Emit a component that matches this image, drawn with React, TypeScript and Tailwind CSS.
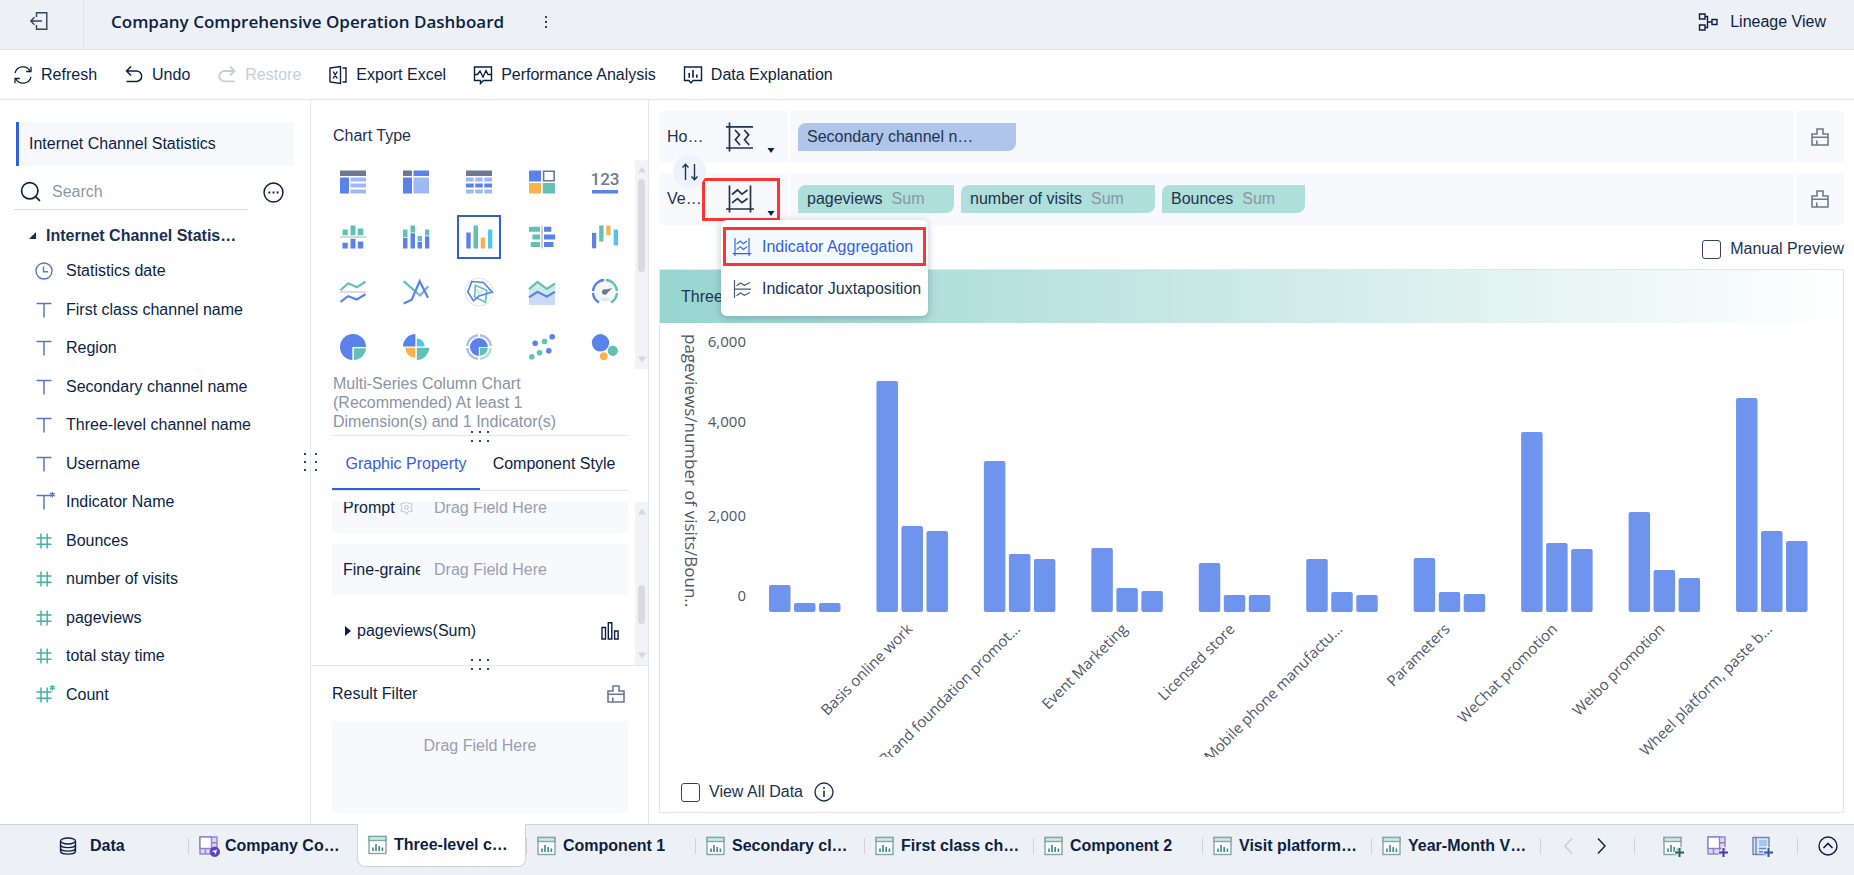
import { useState } from "react";
import type { ReactNode } from "react";

const BLUE = "#5b82ea";
const SOFT = "#9dbaf5";
const GREY = "#6b7a90";
const GREEN = "#62c0b4";
const ORANGE = "#fbb24c";
const CYAN = "#4fc6f2";

interface IconProps {
  children: ReactNode;
  className?: string;
  box?: number;
}

function Icon({ children, className = "size-5", box = 20 }: IconProps) {
  return (
    <svg
      viewBox={`0 0 ${box} ${box}`}
      className={`shrink-0 ${className}`}
      fill="none"
      stroke="currentColor"
      strokeWidth="1.4"
      aria-hidden="true"
    >
      {children}
    </svg>
  );
}

/* ---------- small icons ---------- */

const BrushIcon = () => (
  <Icon className="size-5 text-[#6b7a90]">
    <path d="M2 18V7H7V2H13V7H18V18ZM2 10.3H18M6.8 18V13.5" strokeWidth="1.6" />
  </Icon>
);

const ComponentIcon = ({ plus = false }: { plus?: boolean }) => (
  <Icon className="size-[22px]" box={22}>
    <rect x="2" y="2.5" width="17" height="17" fill="#fff" stroke="#7fa9a5" />
    <rect x="2" y="2.5" width="17" height="4" fill="#cfeae6" stroke="#7fa9a5" />
    <path d="M6 17V13.5M9 17V10M12.2 17V12M15.4 17V13.5" stroke="#3c8a83" strokeWidth="1.6" />
    {plus && (
      <>
        <path d="M17.5 12V22M12.5 17.5H22" stroke="#edf1f6" strokeWidth="4" />
        <path d="M17.5 13V22M13 17.5H22" stroke="#245f59" strokeWidth="2" />
      </>
    )}
  </Icon>
);

const DashboardIcon = ({ plus = false }: { plus?: boolean }) => (
  <Icon className="size-[22px]" box={22}>
    <rect x="2" y="2" width="17" height="17" fill="#dcd7f5" stroke="#8d80cf" />
    <rect x="2" y="2" width="11.5" height="11.5" fill="#fff" stroke="#8d80cf" />
    <path d="M7.5 13.5V19M13.5 13.5V19M13.5 7.8H19M13.5 13.5H19" stroke="#8d80cf" />
    {plus ? (
      <>
        <path d="M17.5 12V22M12.5 17.5H22" stroke="#edf1f6" strokeWidth="4" />
        <path d="M17.5 13V22M13 17.5H22" stroke="#4a35a8" strokeWidth="2" />
      </>
    ) : (
      <>
        <circle cx="16.8" cy="16.8" r="4.8" fill="#5a45bd" stroke="#5a45bd" strokeWidth="0.8" />
        <path d="M13.8 16.2L19.2 14.4L17.4 19.8L16.6 17.2Z" fill="#fff" stroke="none" />
      </>
    )}
  </Icon>
);

const ReportIcon = () => (
  <Icon className="size-[22px]" box={22}>
    <rect x="2" y="2.5" width="16" height="17" fill="#dce6f8" stroke="#6785bd" />
    <path d="M5 2.5V19.5" stroke="#6785bd" />
    <rect x="8" y="5" width="8" height="6" fill="#aac3ef" stroke="none" />
    <path d="M8 13.5H15M8 16.8H12" stroke="#6785bd" />
    <path d="M17.5 12.5V22M12.5 17.5H22" stroke="#edf1f6" strokeWidth="4" />
    <path d="M17.5 13V22M13 17.5H22" stroke="#33579c" strokeWidth="2" />
  </Icon>
);

const AggregateIcon = ({ className }: { className: string }) => (
  <Icon className={className} box={30}>
    <path d="M4.5 1.5V28.5M25.5 1.5V28.5M1 25H29" strokeWidth="1.7" />
    <path d="M7 10.5L12.5 6L17 10.2L22.5 6M7 18.8L12.5 14.5L17 18.6L22.5 14.5" strokeWidth="1.7" />
  </Icon>
);

const AggregateHorizontalIcon = () => (
  <Icon className="size-[30px]" box={30}>
    <path d="M4.5 0.5V29.5M1 4.8H28M1 26H28" strokeWidth="1.7" />
    <path d="M10 8L14.5 12.8L10.4 17.8L15 23M19.2 8L23.7 12.8L19.6 17.8L24.2 23" strokeWidth="1.7" />
  </Icon>
);

const JuxtaposeIcon = () => (
  <Icon className="size-5 text-[#4a5a75]">
    <path d="M2.5 1V19M2.5 10.2H19" strokeWidth="1.2" />
    <path d="M4.5 6.8L8.5 4L12.5 6.3L18 3.5M4.5 16.8L8.5 14L12.5 16.3L18 13.5" strokeWidth="1.2" />
  </Icon>
);

const Caret = () => (
  <svg viewBox="0 0 8 5" className="h-[5px] w-2 shrink-0 fill-[#0d1f42]" aria-hidden="true">
    <path d="M0.5 0H7.5L4 5Z" />
  </svg>
);

const Dots = () => (
  <div className="grid grid-cols-3 gap-x-[6px] gap-y-[7px]">
    {[0, 1, 2, 3, 4, 5].map((i) => (
      <span key={i} className="size-[2px] bg-[#33435f]" />
    ))}
  </div>
);

/* ---------- toolbar ---------- */

const toolbar = [
  {
    label: "Refresh",
    icon: (
      <Icon>
        <path d="M2 8.2A8.2 8.2 0 0 1 17.2 6.2M18 11.8A8.2 8.2 0 0 1 2.8 13.8" strokeWidth="1.3" />
        <path d="M18 1.8V6.5H13.2M2 18.2V13.5H6.8" strokeWidth="1.3" />
      </Icon>
    ),
  },
  {
    label: "Undo",
    icon: (
      <Icon>
        <path d="M7 1.5L2.5 6L7 10.5M2.5 6H12.5A5.2 5.2 0 0 1 12.5 16.4H2.5" strokeWidth="1.5" />
      </Icon>
    ),
  },
  {
    label: "Restore",
    disabled: true,
    icon: (
      <Icon>
        <path d="M13 1.5L17.5 6L13 10.5M17.5 6H7.5A5.2 5.2 0 0 0 7.5 16.4H17.5" strokeWidth="1.8" />
      </Icon>
    ),
  },
  {
    label: "Export Excel",
    icon: (
      <Icon>
        <path d="M2 3L12.5 1.5V18.5L2 17ZM14.5 3H18V17H14.5M5.2 6.5L9.2 13.5M9.2 6.5L5.2 13.5" />
      </Icon>
    ),
  },
  {
    label: "Performance Analysis",
    icon: (
      <Icon>
        <path d="M1.5 2H18.5V15.5H10.5L7.5 18.5V15.5H1.5Z" />
        <path d="M1.5 9.5H4.5L7 6L10 12L13 5.5L15 9.5H18" />
      </Icon>
    ),
  },
  {
    label: "Data Explanation",
    icon: (
      <Icon>
        <path d="M1.5 2H18.5V15.5H10L8 18L6 15.5H1.5Z" />
        <path d="M6.2 8V12.8M10 5V12.8M13.8 9.5V12.8" strokeWidth="1.6" />
      </Icon>
    ),
  },
];

function Toolbar() {
  return (
    <div className="flex h-[50px] shrink-0 items-center gap-[27px] border-b border-[#e3e6ee] px-[13px]">
      {toolbar.map((t) => (
        <button
          key={t.label}
          type="button"
          disabled={t.disabled}
          className="flex items-center gap-2 whitespace-nowrap disabled:text-[#c8cdd6]"
        >
          {t.icon}
          {t.label}
        </button>
      ))}
    </div>
  );
}

/* ---------- left: field tree ---------- */

type FieldKind = "date" | "text" | "number";

const fields: { name: string; kind: FieldKind; star?: boolean }[] = [
  { name: "Statistics date", kind: "date" },
  { name: "First class channel name", kind: "text" },
  { name: "Region", kind: "text" },
  { name: "Secondary channel name", kind: "text" },
  { name: "Three-level channel name", kind: "text" },
  { name: "Username", kind: "text" },
  { name: "Indicator Name", kind: "text", star: true },
  { name: "Bounces", kind: "number" },
  { name: "number of visits", kind: "number" },
  { name: "pageviews", kind: "number" },
  { name: "total stay time", kind: "number" },
  { name: "Count", kind: "number", star: true },
];

function FieldIcon({ kind, star }: { kind: FieldKind; star?: boolean }) {
  const color = kind === "number" ? "text-[#41b3a6]" : "text-[#5578c8]";
  return (
    <Icon className={`size-5 overflow-visible ${color}`}>
      {kind === "date" && (
        <>
          <circle cx="10" cy="10" r="8" />
          <path d="M9.5 5.5V10.8H14" />
        </>
      )}
      {kind === "text" && <path d="M2.5 3.5H17.5M10 3.5V17.5" strokeWidth="1.5" />}
      {kind === "number" && <path d="M2.5 7H17.5M2.5 13.2H17.5M7 2.5V17.5M13.2 2.5V17.5" strokeWidth="1.5" />}
      {star && <path d="M18.3 0V5.4M15.9 1.3L20.7 4.1M20.7 1.3L15.9 4.1" strokeWidth="1.3" />}
    </Icon>
  );
}

function FieldPanel() {
  return (
    <aside className="flex w-[311px] shrink-0 flex-col border-r border-[#e3e6ee] pt-[22px]">
      <button
        type="button"
        className="mr-4 ml-4 h-11 border-l-[3px] border-[#2f62d9] bg-[#f7f9fd] pl-[10px] text-left"
      >
        Internet Channel Statistics
      </button>
      <div className="mt-2 flex items-center justify-between pr-[26px] pl-[14px]">
        <label className="flex h-9 w-[234px] items-center gap-[11px] border-b border-[#d9dce3] pl-[6px]">
          <Icon className="size-[21px]">
            <circle cx="9.3" cy="9.3" r="7.8" strokeWidth="1.6" />
            <path d="M14.8 14.8L19 19" strokeWidth="1.6" />
          </Icon>
          <input
            aria-label="Search"
            placeholder="Search"
            className="w-full min-w-0 bg-transparent outline-none placeholder:text-[#8f97a6]"
          />
        </label>
        <button type="button" aria-label="More">
          <Icon className="size-[21px]">
            <circle cx="10" cy="10" r="9" />
            <path d="M5.2 10H7M9.1 10H10.9M13 10H14.8" strokeWidth="1.8" />
          </Icon>
        </button>
      </div>
      <button type="button" className="mt-3 flex h-[27px] items-center gap-[10px] pl-[29px] font-bold text-[#1b2f52]">
        <svg viewBox="0 0 7 7" className="size-[7px] fill-[#1b2f52]" aria-hidden="true">
          <path d="M7 0V7H0Z" />
        </svg>
        Internet Channel Statis…
      </button>
      <ul className="mt-[3px] flex h-[462px] flex-col">
        {fields.map((f) => (
          <li key={f.name} className="flex flex-1 items-center gap-3 pl-[34px]">
            <FieldIcon kind={f.kind} star={f.star} />
            {f.name}
          </li>
        ))}
      </ul>
    </aside>
  );
}

/* ---------- middle: chart type and properties ---------- */

const chartTypes: { name: string; art: ReactNode }[] = [
  {
    name: "Group table",
    art: (
      <>
        <path fill={GREY} d="M2 3.5H28V9H2Z" />
        <path fill={BLUE} d="M2 10.5H11V26.5H2Z" />
        <path fill={SOFT} d="M12.5 10.5H28V14.5H12.5ZM12.5 16.5H28V20.5H12.5ZM12.5 22.5H28V26.5H12.5Z" />
      </>
    ),
  },
  {
    name: "Cross table",
    art: (
      <>
        <path fill={GREY} d="M2 3.5H11V9H2Z" />
        <path fill={BLUE} d="M12.5 3.5H28V9H12.5ZM2 10.5H11V26.5H2Z" />
        <path fill={SOFT} d="M12.5 10.5H28V26.5H12.5Z" />
      </>
    ),
  },
  {
    name: "Detail table",
    art: (
      <>
        <path fill={GREY} d="M2 3.5H28V9H2Z" />
        <path fill={SOFT} d="M2 10.5H9.7V14.5H2ZM11.3 10.5H18.7V14.5H11.3ZM20.3 10.5H28V14.5H20.3ZM2 22.5H9.7V26.5H2ZM11.3 22.5H18.7V26.5H11.3ZM20.3 22.5H28V26.5H20.3Z" />
        <path fill={BLUE} d="M2 16.5H9.7V20.5H2ZM11.3 16.5H18.7V20.5H11.3ZM20.3 16.5H28V20.5H20.3Z" />
      </>
    ),
  },
  {
    name: "Heat block",
    art: (
      <>
        <path fill={BLUE} d="M2 3.5H14V14.5H2Z" />
        <path stroke={GREY} strokeWidth="1.6" fill="#fff" d="M16.6 4.3H27.2V13.7H16.6Z" />
        <path fill={ORANGE} d="M2 16H14V26.5H2Z" />
        <path fill={GREEN} d="M15.8 16H28V26.5H15.8Z" />
      </>
    ),
  },
  {
    name: "KPI card",
    art: (
      <>
        <text
          x="15"
          y="18"
          textAnchor="middle"
          fill={GREY}
          className="font-['Roboto',sans-serif] text-[17px] font-medium"
        >
          123
        </text>
        <path fill={BLUE} d="M2 23H28V26.5H2Z" />
      </>
    ),
  },
  {
    name: "Contrast column",
    art: (
      <>
        <path fill="#b9c0cb" d="M2 14.4H28V15.6H2Z" />
        <path fill={GREEN} d="M4.5 7.5H9.8V13.2H4.5ZM12.5 3.5H17.5V13.2H12.5ZM19.8 6.5H25.3V13.2H19.8Z" />
        <path fill={BLUE} d="M4.5 20.8H9.8V26.5H4.5ZM12.5 16.8H17.5V26.5H12.5ZM19.8 19.5H25.3V26.5H19.8Z" />
      </>
    ),
  },
  {
    name: "Stacked column",
    art: (
      <>
        <path fill={GREEN} d="M2 7.5H6.5V15H2ZM9.5 3.5H14V10.5H9.5ZM16.5 14H21V19H16.5ZM24 7.5H28.3V13.5H24Z" />
        <path fill={BLUE} d="M2 15.8H6.5V26.5H2ZM9.5 11.2H14V26.5H9.5ZM16.5 19.8H21V26.5H16.5ZM24 14.2H28.3V26.5H24Z" />
      </>
    ),
  },
  {
    name: "Multi-series column",
    art: (
      <>
        <path fill={BLUE} d="M2.3 10.5H6.7V26.5H2.3Z" />
        <path fill={GREEN} d="M9.5 3.5H14V26.5H9.5Z" />
        <path fill={ORANGE} d="M16.7 15.5H21V26.5H16.7Z" />
        <path fill={CYAN} d="M24 7.5H28.3V26.5H24Z" />
      </>
    ),
  },
  {
    name: "Butterfly",
    art: (
      <>
        <path fill="#9aa4b3" d="M14.5 3.5H15.5V26.5H14.5Z" />
        <path fill={GREEN} d="M2 4.8H13V9.8H2ZM5.5 12.5H13V17.5H5.5ZM3.8 20H13V25H3.8Z" />
        <path fill={BLUE} d="M17 4.8H24.3V9.8H17ZM17 12.5H28.2V17.5H17ZM17 20H26.5V25H17Z" />
      </>
    ),
  },
  {
    name: "Waterfall",
    art: (
      <>
        <path fill={BLUE} d="M2 10.8H6.2V26.3H2Z" />
        <path fill={GREEN} d="M9.2 3.5H13.5V19.5H9.2Z" />
        <path fill={ORANGE} d="M16.3 3.5H20.5V13H16.3Z" />
        <path fill={CYAN} d="M23.7 7.5H28V23.5H23.7Z" />
      </>
    ),
  },
  {
    name: "Range line",
    art: (
      <g fill="none" strokeWidth="2.2">
        <path stroke={GREEN} d="M2.5 13.2L10.2 6.2L18.8 10.2L27.5 4.8" />
        <path stroke="#c5cbd5" strokeWidth="1.2" d="M2 15H28" />
        <path stroke={BLUE} d="M2.5 24.8L10.2 19.2L18.8 22.5L27.5 17.2" />
      </g>
    ),
  },
  {
    name: "Line",
    art: (
      <g fill="none" strokeWidth="2.2">
        <path stroke={GREEN} d="M2.7 4.2L19 18.5L27.3 9.2" />
        <path stroke={BLUE} d="M2.7 26.5L10.7 22.8L18.7 4.2L27 20.8" />
      </g>
    ),
  },
  {
    name: "Radar",
    art: (
      <g fill="none">
        <circle cx="15" cy="15" r="14" stroke="#dde0e6" />
        <path fill="#e3e7ee" d="M11 12L20 14L14 19Z" />
        <path stroke={GREEN} strokeWidth="1.7" d="M11.5 8.2L22.8 13.5L21.5 25.2L10.5 19.8Z" />
        <path stroke={BLUE} strokeWidth="1.7" d="M7.8 4.5L19.5 5.5L28.2 15L15 19L9.5 23.8L3.8 15Z" />
      </g>
    ),
  },
  {
    name: "Area",
    art: (
      <>
        <path fill="#cdebe6" d="M2 12.2L10.5 4.8L19.8 11.8L28 6.5V13L19.8 18L10.5 13.5L2 18.5Z" />
        <path fill="#ccd9f8" d="M2 20.2L10.5 14.8L19.8 19.5L28 14.8V28H2Z" />
        <g fill="none" strokeWidth="2.2">
          <path stroke={GREEN} d="M2 12.2L10.5 4.8L19.8 11.8L28 6.5" />
          <path stroke={BLUE} d="M2 20.2L10.5 14.8L19.8 19.5L28 14.8" />
        </g>
      </>
    ),
  },
  {
    name: "Gauge",
    art: (
      <>
        <circle cx="15" cy="15" r="10" fill="#f5f6f8" />
        <g fill="none" strokeWidth="2.4">
          <path stroke={BLUE} d="M14.2 3A12 12 0 0 0 3 14.2M3 15.8A12 12 0 0 0 9 25.4" />
          <path stroke={GREEN} d="M15.8 3A12 12 0 0 1 27 14.2M27 15.8A12 12 0 0 1 21 25.4" />
          <path stroke="#dcdfe4" strokeWidth="1.8" d="M11 22.5H19" />
        </g>
        <circle cx="14.7" cy="15" r="2.8" fill={GREY} />
        <path fill={GREY} d="M14 13L22.5 11L16 17Z" />
      </>
    ),
  },
  {
    name: "Pie",
    art: (
      <>
        <path fill={BLUE} d="M14.6 15H28A13 13 0 1 0 14.6 28Z" />
        <path fill="#fff" d="M14.6 15H29V29H14.6Z" />
        <path fill={GREEN} d="M15.8 16.2H28A12.6 12.6 0 0 1 15.8 28Z" />
      </>
    ),
  },
  {
    name: "Rose",
    art: (
      <>
        <path fill={BLUE} d="M14.4 14.4H2A12.6 12.6 0 0 1 14.4 2Z" />
        <path fill={CYAN} d="M15.8 14.4V6.5A8 8 0 0 1 23.7 14.4Z" />
        <path fill={ORANGE} d="M14.4 15.8V26A10.3 10.3 0 0 1 4.2 15.8Z" />
        <path fill={GREEN} d="M15.8 15.8H28.2A12.6 12.6 0 0 1 15.8 28Z" />
      </>
    ),
  },
  {
    name: "Nested pie",
    art: (
      <>
        <g fill="none" strokeWidth="2.6">
          <path stroke="#a9bff5" d="M16 3.2A11.9 11.9 0 0 1 26.9 14M14 3.2A11.9 11.9 0 0 0 3.1 14M3.1 16A11.9 11.9 0 0 0 14 26.8" />
          <path stroke="#aeded7" d="M26.9 16A11.9 11.9 0 0 1 16 26.8" />
        </g>
        <path fill={BLUE} d="M14.8 15H23.8A8.9 8.9 0 1 0 14.8 23.9Z" />
        <path fill={GREEN} d="M15.8 15.8H23.8A8.2 8.2 0 0 1 15.8 23.8Z" />
      </>
    ),
  },
  {
    name: "Scatter",
    art: (
      <>
        <g fill={BLUE}>
          <circle cx="25.2" cy="4.8" r="2.8" />
          <circle cx="8.2" cy="11.2" r="2.8" />
          <circle cx="21.8" cy="18.8" r="2.8" />
        </g>
        <g fill={GREEN}>
          <circle cx="17.5" cy="9.5" r="2.8" />
          <circle cx="12.5" cy="20.8" r="2.8" />
          <circle cx="4.8" cy="24.8" r="2.8" />
        </g>
      </>
    ),
  },
  {
    name: "Bubble",
    art: (
      <>
        <circle cx="10.5" cy="10.8" r="8.7" fill={BLUE} />
        <circle cx="22.8" cy="18.8" r="5.1" fill={GREEN} />
        <circle cx="13.8" cy="24.2" r="3.9" fill={ORANGE} />
      </>
    ),
  },
];

function ScrollTrack({ thumb }: { thumb: string }) {
  return (
    <div className="flex w-[13px] shrink-0 flex-col items-center bg-[#f2f3f6] py-[6px]">
      <svg viewBox="0 0 8 7" className="h-[7px] w-2 shrink-0 fill-[#d5d7dc]" aria-hidden="true">
        <path d="M4 0.5L8 6.5H0Z" />
      </svg>
      <div className={`w-[7px] rounded-full bg-[#d9dbe0] ${thumb}`} />
      <svg viewBox="0 0 8 7" className="mt-auto h-[7px] w-2 shrink-0 fill-[#d5d7dc]" aria-hidden="true">
        <path d="M4 6.5L0 0.5H8Z" />
      </svg>
    </div>
  );
}

function PropertyPanel() {
  const [selected, setSelected] = useState("Multi-series column");

  return (
    <section className="relative flex w-[338px] shrink-0 flex-col border-r border-[#e3e6ee]">
      <h2 className="pt-[26px] pl-[22px] leading-[19px] text-[#1f3050]">Chart Type</h2>
      <div className="mt-[15px] flex h-[209px] shrink-0">
        <div className="grid flex-1 grid-cols-[repeat(5,44px)] content-start justify-between gap-y-[11px] pr-2 pl-5">
          {chartTypes.map((c) => (
            <button
              key={c.name}
              type="button"
              aria-label={c.name}
              aria-pressed={c.name === selected}
              onClick={() => setSelected(c.name)}
              className={`flex size-11 items-center justify-center ${
                c.name === selected ? "border-2 border-[#2f62d9]" : ""
              }`}
            >
              <svg viewBox="0 0 30 30" className="size-[30px] shrink-0" aria-hidden="true">
                {c.art}
              </svg>
            </button>
          ))}
        </div>
        <ScrollTrack thumb="mt-[6px] h-[93px]" />
      </div>
      <p className="mt-[5px] pr-[50px] pl-[22px] leading-[19px] text-[#8b94a5]">
        Multi-Series Column Chart (Recommended) At least 1 Dimension(s) and 1 Indicator(s)
      </p>

      <div className="relative mr-5 ml-[21px] h-[5px] border-b border-[#e3e6ee]">
        <div className="absolute inset-x-0 top-0 flex justify-center">
          <Dots />
        </div>
      </div>
      <div role="tablist" className="mr-5 ml-[21px] flex h-[55px] shrink-0 border-b border-[#e3e6ee] whitespace-nowrap">
        <button
          type="button"
          role="tab"
          aria-selected="true"
          className="flex-1 border-b-2 border-[#2f62d9] pt-1 text-[#2f62d9]"
        >
          Graphic Property
        </button>
        <button type="button" role="tab" aria-selected="false" className="flex-1 pt-[2px]">
          Component Style
        </button>
      </div>

      <div className="mt-[11px] flex h-[163px] shrink-0 overflow-hidden">
        <div className="flex flex-1 flex-col justify-end gap-[11px] pr-[7px] pl-[21px]">
          <div className="flex h-[51px] shrink-0 items-center bg-[#f7f9fd] pl-[11px]">
            <span className="flex w-[91px] items-center gap-1">
              Prompt
              <Icon className="size-[15px] text-[#c8cdd6]">
                <path d="M10 1.5L12.6 4.3L17.4 5.2L16.4 10L17.4 14.8L12.6 15.7L10 18.5L7.4 15.7L2.6 14.8L3.6 10L2.6 5.2L7.4 4.3Z" strokeWidth="1.6" />
                <circle cx="10" cy="10" r="2.4" strokeWidth="1.6" />
              </Icon>
            </span>
            <span className="text-[#98a0af]">Drag Field Here</span>
          </div>
          <div className="flex h-[51px] shrink-0 items-center bg-[#f7f9fd] pl-[11px]">
            <span className="mr-[14px] w-[77px] overflow-hidden whitespace-nowrap">Fine-grained</span>
            <span className="text-[#98a0af]">Drag Field Here</span>
          </div>
          <div className="mb-[9px] flex h-[50px] shrink-0 items-center pr-2 pl-[13px]">
            <svg viewBox="0 0 6 10" className="mr-[6px] h-[10px] w-[6px] fill-[#0d1f42]" aria-hidden="true">
              <path d="M0 0L6 5L0 10Z" />
            </svg>
            <span className="flex-1">pageviews(Sum)</span>
            <Icon>
              <path d="M2 6.5H5.5V18H2ZM8.3 1.8H11.8V18H8.3ZM14.6 10H18.1V18H14.6Z" />
            </Icon>
          </div>
        </div>
        <ScrollTrack thumb="mt-[70px] h-[39px]" />
      </div>

      <div className="relative flex flex-1 flex-col border-t border-[#e3e6ee] pb-[11px]">
        <div className="absolute inset-x-0 -top-[7px] flex justify-center">
          <Dots />
        </div>
        <div className="flex h-[55px] items-center justify-between pr-[22px] pl-[21px]">
          Result Filter
          <button type="button" aria-label="Clear result filter">
            <BrushIcon />
          </button>
        </div>
        <div className="mr-5 ml-[21px] flex-1 bg-[#f7f9fd] pt-4 text-center leading-[18px] text-[#98a0af]">
          Drag Field Here
        </div>
      </div>

      <div className="absolute top-[353px] -left-[7px] grid grid-cols-2 gap-x-[9px] gap-y-[6px]">
        {[0, 1, 2, 3, 4, 5].map((i) => (
          <span key={i} className="size-[2px] bg-[#33435f]" />
        ))}
      </div>
    </section>
  );
}

/* ---------- right: axes and chart ---------- */

const verticalFields = [
  { name: "pageviews", width: "w-[156px]" },
  { name: "number of visits", width: "w-[194px]" },
  { name: "Bounces", width: "w-[143px]" },
];

const series: { label: string; bars: [number, number, number] }[] = [
  { label: "", bars: [27, 9, 9] },
  { label: "Basis online work", bars: [231, 86, 81] },
  { label: "Brand foundation promot…", bars: [151, 58, 53] },
  { label: "Event Marketing", bars: [64, 24, 21] },
  { label: "Licensed store", bars: [49, 17, 17] },
  { label: "Mobile phone manufactu…", bars: [53, 20, 17] },
  { label: "Parameters", bars: [54, 20, 18] },
  { label: "WeChat promotion", bars: [180, 69, 63] },
  { label: "Weibo promotion", bars: [100, 42, 34] },
  { label: "Wheel platform, paste b…", bars: [214, 81, 71] },
];

const yTicks = [
  { label: "6,000", y: 18 },
  { label: "4,000", y: 98 },
  { label: "2,000", y: 192 },
  { label: "0", y: 272 },
];

function ColumnChart() {
  const base = 289;
  const start = 109;
  const step = 107.45;
  return (
    <svg
      viewBox="0 0 1183 434"
      className="block w-full overflow-hidden fill-[#4e5767] font-['Open_Sans',sans-serif] text-[15px]"
      role="img"
      aria-label="Three-level channel column chart"
    >
      <text transform="translate(25 11) rotate(90)" className="text-[17px]">
        pageviews/number of visits/Boun..
      </text>
      {yTicks.map((t) => (
        <text key={t.label} x="86" y={t.y + 6} textAnchor="end">
          {t.label}
        </text>
      ))}
      {series.map((s, i) => {
        const x = start + i * step;
        return (
          <g key={i}>
            {s.bars.map((h, k) => (
              <rect key={k} x={x + k * 25} y={base - h} width="21.5" height={h} rx="2" fill="#6f94ee" />
            ))}
            <text textAnchor="end" transform={`translate(${x + 37} 307) rotate(-45)`}>
              {s.label}
            </text>
          </g>
        );
      })}
    </svg>
  );
}

function AxisRows() {
  const rowButton = "flex h-[43px] w-[78px] shrink-0 items-center border-[3px] pl-5";
  return (
    <div className="relative flex flex-col gap-[11px]">
      <div className="flex h-[51px] gap-[2px]">
        <div className="flex w-[129px] items-center bg-[#f7f9fd] pl-2">
          <span className="w-[35px] shrink-0">Ho…</span>
          <button type="button" aria-label="Horizontal axis layout" className={`${rowButton} border-transparent`}>
            <AggregateHorizontalIcon />
            <span className="mt-7 ml-3">
              <Caret />
            </span>
          </button>
        </div>
        <div className="flex flex-1 items-center bg-[#f7f9fd] pl-2">
          <button
            type="button"
            className="h-7 w-[218px] rounded-tl-lg rounded-br-lg bg-[#b0c5ea] pl-[9px] text-left"
          >
            Secondary channel n…
          </button>
        </div>
        <button type="button" aria-label="Clear horizontal axis" className="flex w-12 items-center justify-center bg-[#f7f9fd]">
          <BrushIcon />
        </button>
      </div>

      <div className="flex h-[52px] gap-[2px]">
        <div className="flex w-[129px] items-center bg-[#f7f9fd] pl-2">
          <span className="w-[35px] shrink-0">Ve…</span>
          <button type="button" aria-label="Vertical axis layout" aria-expanded="true" className={`${rowButton} border-[#fb3434]`}>
            <AggregateIcon className="size-[30px]" />
            <span className="mt-7 ml-3">
              <Caret />
            </span>
          </button>
        </div>
        <div className="flex flex-1 items-center gap-[7px] bg-[#f7f9fd] pl-2">
          {verticalFields.map((f) => (
            <button
              key={f.name}
              type="button"
              className={`flex h-7 items-center gap-[9px] rounded-tl-lg rounded-br-lg bg-[#aedfda] pl-[9px] whitespace-nowrap ${f.width}`}
            >
              {f.name}
              <span className="text-[#8896a5]">Sum</span>
            </button>
          ))}
        </div>
        <button type="button" aria-label="Clear vertical axis" className="flex w-12 items-center justify-center bg-[#f7f9fd]">
          <BrushIcon />
        </button>
      </div>

      <button
        type="button"
        aria-label="Swap axes"
        className="absolute top-11 left-[14px] flex size-[33px] items-center justify-center rounded-full bg-[#edf2fc]"
      >
        <Icon>
          <path d="M5.5 18V2.5M2.5 5.5L5.5 2.2L8.5 5.5M14.5 2V17.5M11.5 14.5L14.5 17.8L17.5 14.5" />
        </Icon>
      </button>

      <div className="absolute top-[109px] left-[62px] z-10 flex h-24 w-[207px] flex-col rounded-md bg-white px-[2px] pt-[7px] whitespace-nowrap shadow-[0_2px_8px_rgba(40,60,90,0.3)]">
        <button
          type="button"
          className="flex h-[39px] items-center gap-[10px] border-[3px] border-[#fb3434] bg-[#f4f9ff] pl-[6px] text-[#2f62d9]"
        >
          <AggregateIcon className="size-5" />
          Indicator Aggregation
        </button>
        <button type="button" className="mt-1 flex h-[37px] items-center gap-[10px] pl-[9px]">
          <JuxtaposeIcon />
          Indicator Juxtaposition
        </button>
      </div>
    </div>
  );
}

function CheckOption({ id, label }: { id: string; label: string }) {
  return (
    <span className="flex items-center gap-[9px]">
      <input
        id={id}
        type="checkbox"
        className="size-[19px] appearance-none rounded-[3px] border border-[#33435f] bg-white checked:bg-[#2f62d9]"
      />
      <label htmlFor={id}>{label}</label>
    </span>
  );
}

function ChartArea() {
  return (
    <main className="flex min-w-0 flex-1 flex-col px-[10px] pt-[11px] pb-[11px] text-[#22324f]">
      <AxisRows />
      <div className="flex h-11 items-center justify-end pt-1">
        <CheckOption id="manual-preview" label="Manual Preview" />
      </div>
      <div className="flex flex-1 flex-col border border-[#e3e6ee]">
        <h2 className="flex h-[53px] shrink-0 items-center bg-linear-to-r from-[#98d5d0] to-white pl-[21px]">
          Three-level channel
        </h2>
        <ColumnChart />
        <div className="mt-auto flex h-10 items-center gap-[11px] pl-[21px]">
          <CheckOption id="view-all" label="View All Data" />
          <Icon>
            <circle cx="10" cy="10" r="9" />
            <path d="M10 8.5V15M10 5V7" strokeWidth="1.6" />
          </Icon>
        </div>
      </div>
    </main>
  );
}

/* ---------- bottom tabs ---------- */

const tabs = [
  "Company Co…",
  "Three-level c…",
  "Component 1",
  "Secondary cl…",
  "First class ch…",
  "Component 2",
  "Visit platform…",
  "Year-Month V…",
];

const Divider = () => <span className="h-4 w-px shrink-0 bg-[#cdd2dd]" />;

function BottomBar() {
  const active = 1;
  return (
    <nav className="flex h-[51px] shrink-0 bg-[#edf1f6] font-bold">
      <div className="flex w-[188px] items-center border-t border-[#cdd2e0] pb-2 pl-[58px]">
        <button type="button" className="flex items-center gap-3">
          <Icon>
            <ellipse cx="10" cy="5" rx="7.5" ry="3" strokeWidth="1.4" />
            <path d="M2.5 5V15C2.5 19.2 17.5 19.2 17.5 15V5M2.5 8.5C2.5 12.7 17.5 12.7 17.5 8.5M2.5 12C2.5 16.2 17.5 16.2 17.5 12" strokeWidth="1.4" />
          </Icon>
          Data
        </button>
      </div>
      {tabs.map((t, i) => (
        <div
          key={t}
          className={`flex w-[169px] shrink-0 items-center ${
            i === active
              ? "mb-2 rounded-b-lg border-x border-b border-[#cdd2e0] bg-white"
              : "border-t border-[#cdd2e0] pb-2"
          }`}
        >
          {i !== active && <Divider />}
          <button type="button" className="flex items-center gap-[5px] pl-[9px] whitespace-nowrap">
            {i === 0 ? <DashboardIcon /> : <ComponentIcon />}
            {t}
          </button>
        </div>
      ))}
      <div className="flex flex-1 items-center border-t border-[#cdd2e0] pr-4 pb-2">
        <Divider />
        <button type="button" aria-label="Previous tabs" className="ml-auto text-[#c5cad4]">
          <Icon>
            <path d="M13 2.5L6 10L13 17.5" />
          </Icon>
        </button>
        <button type="button" aria-label="Next tabs" className="mr-[23px] ml-3">
          <Icon>
            <path d="M7 2.5L14 10L7 17.5" />
          </Icon>
        </button>
        <Divider />
        <button type="button" aria-label="Add component" className="ml-[27px]">
          <ComponentIcon plus />
        </button>
        <button type="button" aria-label="Add dashboard" className="ml-[22px]">
          <DashboardIcon plus />
        </button>
        <button type="button" aria-label="Add report" className="mr-6 ml-[23px]">
          <ReportIcon />
        </button>
        <Divider />
        <button type="button" aria-label="Collapse" className="ml-5">
          <Icon>
            <circle cx="10" cy="10" r="9" />
            <path d="M5.5 12L10 7.5L14.5 12" strokeWidth="1.6" />
          </Icon>
        </button>
      </div>
    </nav>
  );
}

export default function App() {
  return (
    <div className="flex min-h-screen flex-col bg-white font-['Liberation_Sans',Arial,sans-serif] text-[16px] leading-5 text-[#0d1f42]">
      <header className="flex h-[50px] shrink-0 items-center border-b border-[#e0e4ec] bg-[#edf1f6] pb-[6px]">
        <div className="-mb-[6px] flex h-[50px] w-[84px] items-center border-r border-[#e0e4ec] pb-2 pl-[29px]">
          <button type="button" aria-label="Exit">
            <Icon className="size-5 text-[#33435f]">
              <path d="M7.5 6V1.8H17.8V18.2H7.5V14M13 10H2M5.5 6.2L1.8 10L5.5 13.8" />
            </Icon>
          </button>
        </div>
        <h1 className="pl-[27px] font-['Open_Sans',sans-serif] text-[17px] font-semibold">
          Company Comprehensive Operation Dashboard
        </h1>
        <button type="button" aria-label="More actions" className="ml-8">
          <Icon className="size-5 fill-[#33435f] stroke-none">
            <path d="M9 4H11V6H9ZM9 9H11V11H9ZM9 14H11V16H9Z" />
          </Icon>
        </button>
        <a href="#lineage" className="mr-[28px] ml-auto flex items-center gap-3">
          <Icon>
            <path d="M1.5 2H7V7H1.5ZM1.5 13H7V18H1.5ZM14 7.5H19V12.5H14ZM7 4.5H9.5V15.5H7M9.5 10H14" />
          </Icon>
          Lineage View
        </a>
      </header>
      <Toolbar />
      <div className="flex flex-1">
        <FieldPanel />
        <PropertyPanel />
        <ChartArea />
      </div>
      <BottomBar />
    </div>
  );
}
